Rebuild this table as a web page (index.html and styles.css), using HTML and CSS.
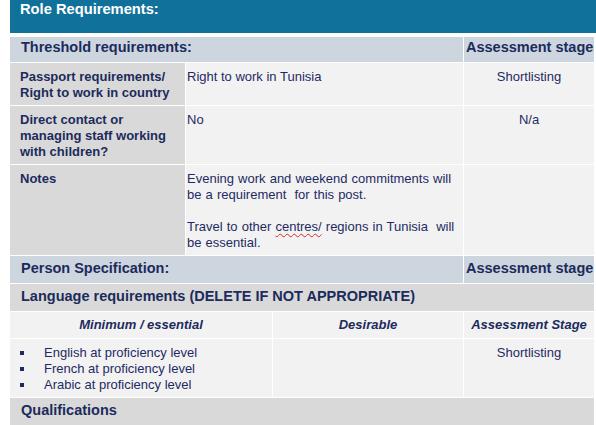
FILE: index.html
```html
<!DOCTYPE html>
<html>
<head>
<meta charset="utf-8">
<link rel="stylesheet" href="styles.css">
</head>
<body>
<div class="page">
  <div class="banner">Role Requirements:</div>
  <div class="sheet">
    <div class="grid upper">
      <div class="head first span2">Threshold requirements:</div>
      <div class="head first stage">Assessment stage</div>

      <div class="label">Passport requirements/<br>Right to work in country</div>
      <div class="cell">Right to work in Tunisia</div>
      <div class="cell center">Shortlisting</div>

      <div class="label">Direct contact or<br>managing staff working<br>with children?</div>
      <div class="cell">No</div>
      <div class="cell center">N/a</div>

      <div class="label">Notes</div>
      <div class="cell notes">Evening work and weekend commitments will<br>be a requirement&nbsp; for this post.<br><br>Travel to other <span class="spell">centres/</span> regions in Tunisia&nbsp; will<br>be essential.</div>
      <div class="cell"></div>

      <div class="head span2">Person Specification:</div>
      <div class="head stage">Assessment stage</div>
    </div>
    <div class="head grey">Language requirements (DELETE IF NOT APPROPRIATE)</div>
    <div class="grid lower">
      <div class="sub">Minimum / essential</div>
      <div class="sub">Desirable</div>
      <div class="sub">Assessment Stage</div>

      <div class="cell list">
        <ul>
          <li>English at proficiency level</li>
          <li>French at proficiency level</li>
          <li>Arabic at proficiency level</li>
        </ul>
      </div>
      <div class="cell"></div>
      <div class="cell center">Shortlisting</div>
    </div>
    <div class="head grey">Qualifications</div>
  </div>
</div>
</body>
</html>
```
FILE: styles.css
```css
html, body {
  margin: 0;
  padding: 0;
  background: #ffffff;
}
body {
  font-family: "Liberation Sans", Arial, sans-serif;
  color: #1e2b63;
}
.page {
  padding-left: 10px;
  width: 586px;
}
.banner {
  height: 33px;
  box-sizing: border-box;
  background: #10729a;
  color: #ffffff;
  font-weight: bold;
  font-size: 14.7px;
  line-height: 17px;
  padding: 1px 0 0 10px;
  margin-bottom: 4px;
}
.sheet {
  width: 584px;
  display: flex;
  flex-direction: column;
  gap: 1px;
}
.grid {
  display: grid;
  gap: 1px;
}
.upper {
  grid-template-columns: 175px 277px 130px;
}
.lower {
  grid-template-columns: 262px 190px 130px;
}
.head {
  background: #cdd5df;
  font-weight: bold;
  font-size: 14.5px;
  line-height: 20px;
  padding: 2px 0 5px 11px;
  color: #1c2b5c;
  white-space: nowrap;
}
.head.first {
  padding-top: 0;
}
.span2 {
  grid-column: 1 / 3;
}
.head.stage {
  padding-left: 2px;
  padding-right: 0;
  text-align: left;
}
.grey {
  background: #d9d9d9;
}
.label {
  background: #d9d9d9;
  font-weight: bold;
  font-size: 13px;
  line-height: 16px;
  padding: 6px 0 4px 10px;
  color: #1c2b5c;
}
.cell {
  background: #f2f2f2;
  font-size: 13px;
  line-height: 16px;
  padding: 6px 0 4px 1px;
}
.center {
  text-align: center;
  padding-left: 0;
}
.notes {
  word-spacing: 0.5px;
}
.spell {
  text-decoration: underline wavy #d42a2a;
  text-decoration-thickness: 1px;
  text-underline-offset: 2px;
}
.sub {
  background: #f2f2f2;
  font-weight: bold;
  font-style: italic;
  font-size: 13px;
  line-height: 16px;
  padding: 5px 0 5px 0;
  text-align: center;
  color: #1c2b5c;
}
.list {
  padding-left: 0;
}
.list ul {
  list-style: none;
  margin: 0;
  padding: 0;
}
.list li {
  position: relative;
  padding-left: 34px;
}
.list li::before {
  content: "";
  position: absolute;
  left: 10px;
  top: 6px;
  width: 4px;
  height: 4px;
  background: #1c2b5c;
}
```
